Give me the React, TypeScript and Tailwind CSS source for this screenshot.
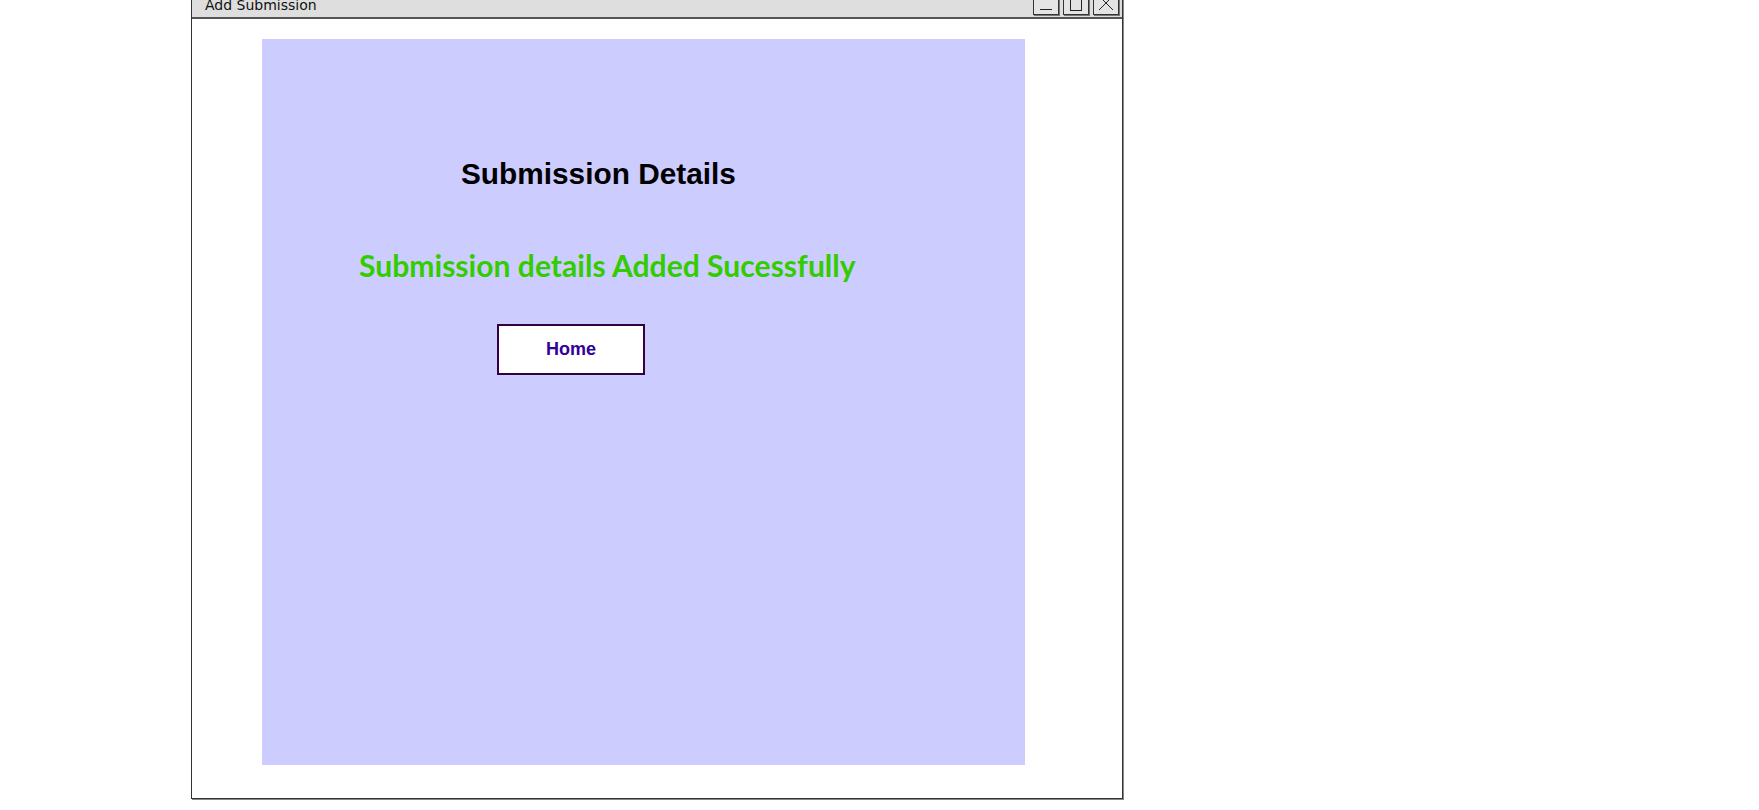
import React from "react";

export default function App() {
  return (
    <div className="w-[1759px] h-[810px] bg-white overflow-hidden">
      <div className="ml-[191px] mt-[-12px] w-[932px] h-[811px] border border-[#333333] shadow-[1px_1px_0_#888888] flex flex-col">
        <div className="h-[30px] shrink-0 bg-[#dedede] border-b-2 border-[#555555] flex items-start justify-between">
          <div
            className="pl-[13px] pt-[8px] text-[14px] leading-[16px] font-medium text-[#111111]"
            style={{ fontFamily: '"DejaVu Sans", "Comic Sans MS", sans-serif' }}
          >
            Add Submission
          </div>
          <div className="flex gap-[4px] pr-[3px]">
            <div className="w-[26px] h-[26px] border border-[#333333] bg-[#e4e4e4] shadow-[1px_1px_0_#777777] flex items-end justify-center pb-[4px]">
              <div className="w-[12px] h-[1px] bg-[#222222]" />
            </div>
            <div className="w-[26px] h-[26px] border border-[#333333] bg-[#e4e4e4] shadow-[1px_1px_0_#777777] flex items-end justify-center pb-[3px]">
              <div className="w-[12px] h-[14px] border border-[#222222]" />
            </div>
            <div className="w-[26px] h-[26px] border border-[#333333] bg-[#e4e4e4] shadow-[1px_1px_0_#777777] flex items-end justify-center pb-[2px]">
              <svg width="18" height="18" viewBox="0 0 18 18">
                <path d="M2 2 L16 16 M16 2 L2 16" stroke="#222222" strokeWidth="1" fill="none" />
              </svg>
            </div>
          </div>
        </div>
        <div className="flex-1 pl-[70px] pt-[20px]">
          <div className="w-[763px] h-[726px] bg-[#ccccff] flex flex-col items-start">
            <div
              className="ml-[199px] mt-[120px] text-[29.8px] leading-[30px] font-bold text-[#000000] whitespace-nowrap"
              style={{ fontFamily: '"Liberation Sans", Arial, sans-serif' }}
            >
              Submission Details
            </div>
            <div
              className="ml-[97px] mt-[61px] text-[30.1px] leading-[30px] font-bold text-[#33cc00] whitespace-nowrap"
              style={{ fontFamily: 'Lato, sans-serif' }}
            >
              Submission details Added Sucessfully
            </div>
            <div
              className="ml-[235px] mt-[44px] w-[148px] h-[51px] border-2 border-[#330044] bg-white flex items-center justify-center text-[18px] font-bold text-[#330099]"
              style={{ fontFamily: '"Liberation Sans", Arial, sans-serif' }}
            >
              Home
            </div>
          </div>
        </div>
      </div>
    </div>
  );
}
